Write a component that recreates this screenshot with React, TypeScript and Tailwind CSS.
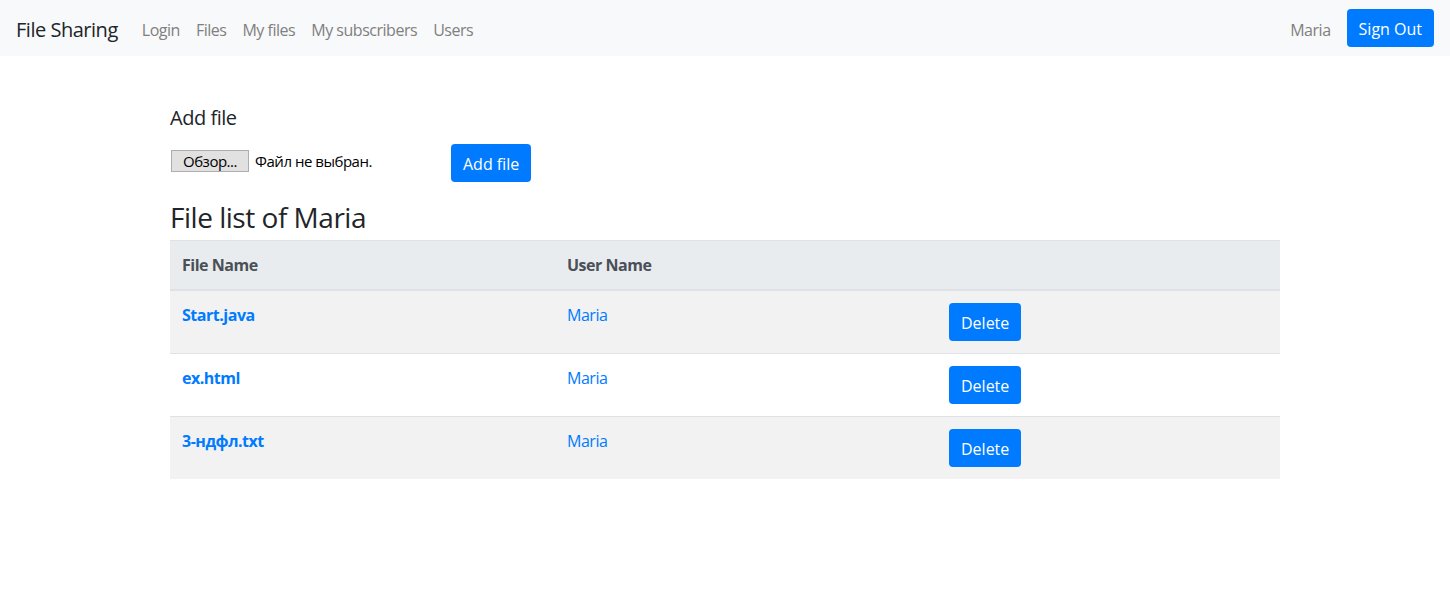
const files = ['Start.java', 'ex.html', '3-ндфл.txt'];

const navLinks = ['Login', 'Files', 'My files', 'My subscribers', 'Users'];

const App = () => {
	return (
		<div className="min-h-screen bg-white font-['Segoe_UI','Open_Sans',sans-serif] tracking-[-0.03em] text-[#212529]">
			<nav className="flex h-[56px] items-center justify-between bg-[#f8f9fa] px-4">
				<div className="flex items-center pt-[3px]">
					<span className="mr-4 text-[20px] leading-[30px]">File Sharing</span>
					<div className="flex">
						{navLinks.map((l) => (
							<a key={l} href="#" className="px-2 text-[16px] leading-6 text-[#808080]">
								{l}
							</a>
						))}
					</div>
				</div>
				<div className="flex items-center">
					<span className="mr-4 pt-[3px] text-[16px] text-[#808080]">Maria</span>
					<button className="h-[38px] rounded-[4px] bg-[#007bff] px-3 pt-[2px] text-[16px] tracking-normal text-white">
						Sign Out
					</button>
				</div>
			</nav>

			<div className="mx-auto w-[1140px] px-[15px]">
				<div className="mt-[50px] text-[20px] leading-6">Add file</div>
				<div className="mt-[14px] flex items-start">
					<div className="mt-[6px] ml-px flex w-[280px] items-center">
						<span className="flex h-[22px] w-[78px] items-center justify-center border border-[#adadad] bg-[#e1e1e1] text-[15px] text-black">
							Обзор...
						</span>
						<span className="ml-[6px] text-[15px] text-black">Файл не выбран.</span>
					</div>
					<button className="h-[38px] rounded-[4px] bg-[#007bff] px-3 pt-[2px] text-[16px] tracking-normal text-white">
						Add file
					</button>
				</div>
				<h3 className="mt-[18px] mb-[6px] text-[28px] leading-[34px]">File list of Maria</h3>
				<table className="w-full border-collapse text-[16px]">
					<thead>
						<tr className="border-t border-[#dee2e6] bg-[#e9ecef] text-left text-[#495057]">
							<th className="w-[385px] border-b-2 border-[#dee2e6] p-3 font-bold">File Name</th>
							<th className="w-[382px] border-b-2 border-[#dee2e6] p-3 font-bold">User Name</th>
							<th className="border-b-2 border-[#dee2e6] p-3"></th>
						</tr>
					</thead>
					<tbody>
						{files.map((f, i) => (
							<tr
								key={f}
								className={`${i % 2 === 0 ? 'bg-[#f2f2f2]' : 'bg-white'} ${i < files.length - 1 ? 'border-b border-[#dee2e6]' : ''}`}>
								<td className="p-3 align-top">
									<a href="#" className="font-bold text-[#007bff]">
										{f}
									</a>
								</td>
								<td className="p-3 align-top">
									<a href="#" className="text-[#007bff]">
										Maria
									</a>
								</td>
								<td className="p-3 align-top">
									<button className="h-[38px] rounded-[4px] bg-[#007bff] px-3 pt-[2px] text-[16px] tracking-normal text-white">
										Delete
									</button>
								</td>
							</tr>
						))}
					</tbody>
				</table>
			</div>
		</div>
	);
};

export default App;
